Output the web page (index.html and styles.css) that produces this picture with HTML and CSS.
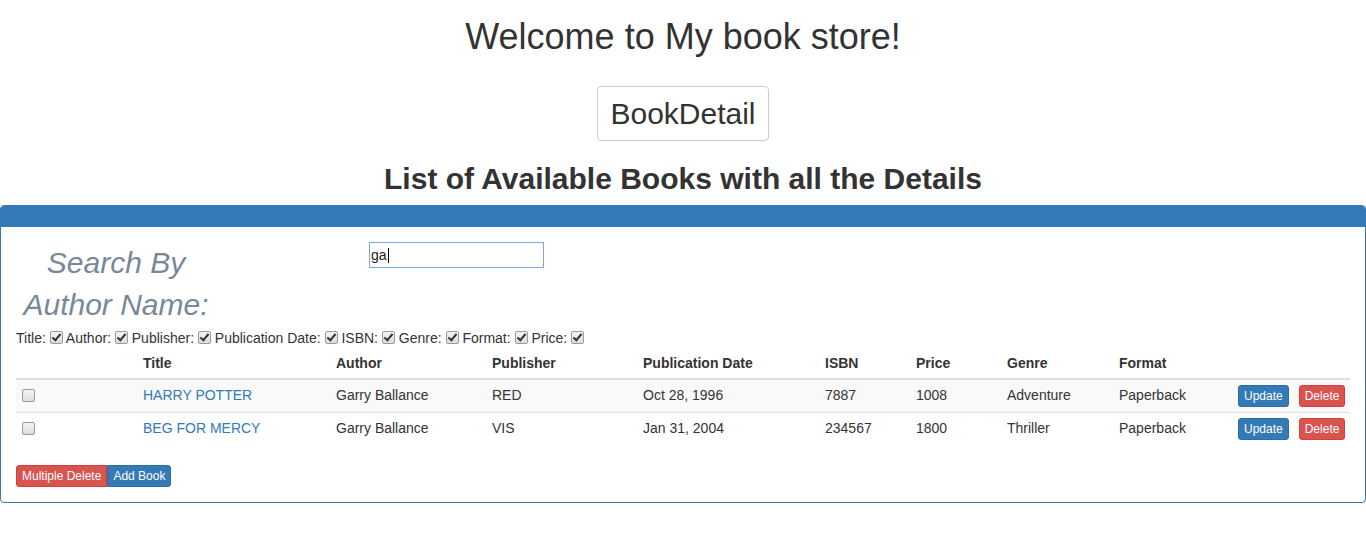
FILE: index.html
```html
<!DOCTYPE html>
<html>
<head>
<meta charset="utf-8">
<link rel="stylesheet" href="styles.css">
</head>
<body>
<h1 class="welcome">Welcome to My book store!</h1>
<div class="nav-row"><button class="btn-detail">BookDetail</button></div>
<h2 class="list-title">List of Available Books with all the Details</h2>
<div class="panel">
  <div class="panel-heading"></div>
  <div class="panel-body">
    <div class="search-row">
      <label class="search-label">Search By Author Name:</label>
      <div class="search-input"><span class="input-text">ga</span><span class="caret"></span></div>
    </div>
    <div class="toggles">
      Title: <span class="cb checked"></span> Author: <span class="cb checked"></span> Publisher: <span class="cb checked"></span> Publication Date: <span class="cb checked"></span> ISBN: <span class="cb checked"></span> Genre: <span class="cb checked"></span> Format: <span class="cb checked"></span> Price: <span class="cb checked"></span>
    </div>
    <table class="books">
      <colgroup>
        <col style="width:119px"><col style="width:193px"><col style="width:156px"><col style="width:151px"><col style="width:182px"><col style="width:91px"><col style="width:91px"><col style="width:112px"><col style="width:119px"><col style="width:120px">
      </colgroup>
      <thead>
        <tr><th></th><th>Title</th><th>Author</th><th>Publisher</th><th>Publication Date</th><th>ISBN</th><th>Price</th><th>Genre</th><th>Format</th><th></th></tr>
      </thead>
      <tbody>
        <tr class="odd">
          <td class="sel"><span class="cb"></span></td>
          <td><a class="title-link">HARRY POTTER</a></td>
          <td>Garry Ballance</td><td>RED</td><td>Oct 28, 1996</td><td>7887</td><td>1008</td><td>Adventure</td><td>Paperback</td>
          <td class="actions"><span class="btn btn-primary">Update</span><span class="btn btn-danger">Delete</span></td>
        </tr>
        <tr>
          <td class="sel"><span class="cb"></span></td>
          <td><a class="title-link">BEG FOR MERCY</a></td>
          <td>Garry Ballance</td><td>VIS</td><td>Jan 31, 2004</td><td>234567</td><td>1800</td><td>Thriller</td><td>Paperback</td>
          <td class="actions"><span class="btn btn-primary">Update</span><span class="btn btn-danger">Delete</span></td>
        </tr>
      </tbody>
    </table>
    <div class="bottom-actions"><span class="btn btn-danger">Multiple Delete</span><span class="btn btn-primary">Add Book</span></div>
  </div>
</div>
</body>
</html>
```

FILE: styles.css
```css
html, body {
  margin: 0;
  padding: 0;
  background: #fff;
}
body {
  font-family: "Liberation Sans", Arial, Helvetica, sans-serif;
  font-size: 14px;
  line-height: 20px;
  color: #333;
}
.welcome {
  margin: 17px 0 0;
  font-size: 36px;
  line-height: 40px;
  font-weight: 400;
  text-align: center;
}
.nav-row {
  display: flex;
  justify-content: center;
  margin-top: 29px;
}
.btn-detail {
  font-family: inherit;
  font-size: 30px;
  line-height: 41px;
  color: #333;
  background: #fff;
  border: 1px solid #ccc;
  border-radius: 4px;
  padding: 6px 12px;
  width: 172px;
}
.list-title {
  margin: 21px 0 10px;
  font-size: 30px;
  line-height: 33px;
  font-weight: 700;
  text-align: center;
}
.panel {
  border: 1px solid #337ab7;
  border-radius: 4px;
  overflow: hidden;
}
.panel-heading {
  height: 21px;
  background: #337ab7;
}
.panel-body {
  padding: 15px;
}
.search-row {
  display: flex;
  align-items: flex-start;
}
.search-label {
  width: 200px;
  text-align: center;
  font-size: 30px;
  line-height: 42px;
  font-style: italic;
  color: #778899;
}
.search-input {
  margin-left: 153px;
  width: 172px;
  height: 24px;
  border: 1px solid #7ea6e0;
  display: flex;
  align-items: center;
  padding-left: 1px;
  font-size: 14px;
  color: #222;
}
.caret {
  display: inline-block;
  width: 1px;
  height: 15px;
  background: #000;
  margin-left: 1px;
}
.toggles {
  line-height: 20px;
  margin-top: 2px;
}
.cb {
  display: inline-block;
  width: 11px;
  height: 11px;
  border: 1px solid #9a9a9a;
  border-radius: 2px;
  background: linear-gradient(#f4f4f4, #dcdcdc);
  vertical-align: -1px;
  position: relative;
  box-sizing: content-box;
}
.cb.checked::after {
  content: "";
  position: absolute;
  left: 3px;
  top: 0px;
  width: 3px;
  height: 7px;
  border: solid #333;
  border-width: 0 2px 2px 0;
  transform: rotate(40deg);
}
.books {
  width: 1334px;
  border-collapse: collapse;
  table-layout: fixed;
  margin-top: 0;
}
.books th, .books td {
  padding: 5px 8px 7px;
  text-align: left;
  line-height: 20px;
  white-space: nowrap;
  vertical-align: middle;
}
.books th {
  padding: 5px 8px 5px;
  font-weight: 700;
  border-bottom: 2px solid #ddd;
}
.books td {
  border-top: 1px solid #ddd;
}
.books tbody tr {
  height: 32px;
}
.books thead + tbody tr:first-child td {
  border-top: 0;
}
.books tr.odd td {
  background: #f9f9f9;
}
.books td.sel {
  padding-left: 6px;
}
.books td.sel .cb {
  vertical-align: -2px;
}
.title-link {
  color: #337ab7;
  text-decoration: none;
}
.btn {
  display: inline-block;
  font-size: 12px;
  line-height: 18px;
  padding: 1px 5px;
  border-radius: 3px;
  color: #fff;
  border: 1px solid transparent;
}
.btn-primary {
  background: #337ab7;
  border-color: #2e6da4;
}
.btn-danger {
  background: #d9534f;
  border-color: #d43f3a;
}
.books td.actions {
  padding-top: 0;
  padding-bottom: 1px;
  line-height: 0;
}
.actions .btn {
  vertical-align: middle;
}
.actions .btn + .btn {
  margin-left: 10px;
}
.bottom-actions {
  display: flex;
  margin-top: 20px;
}
.bottom-actions .btn {
  border-radius: 0;
}
.bottom-actions .btn:first-child {
  border-radius: 3px 0 0 3px;
}
.bottom-actions .btn:last-child {
  border-radius: 0 3px 3px 0;
}
```
